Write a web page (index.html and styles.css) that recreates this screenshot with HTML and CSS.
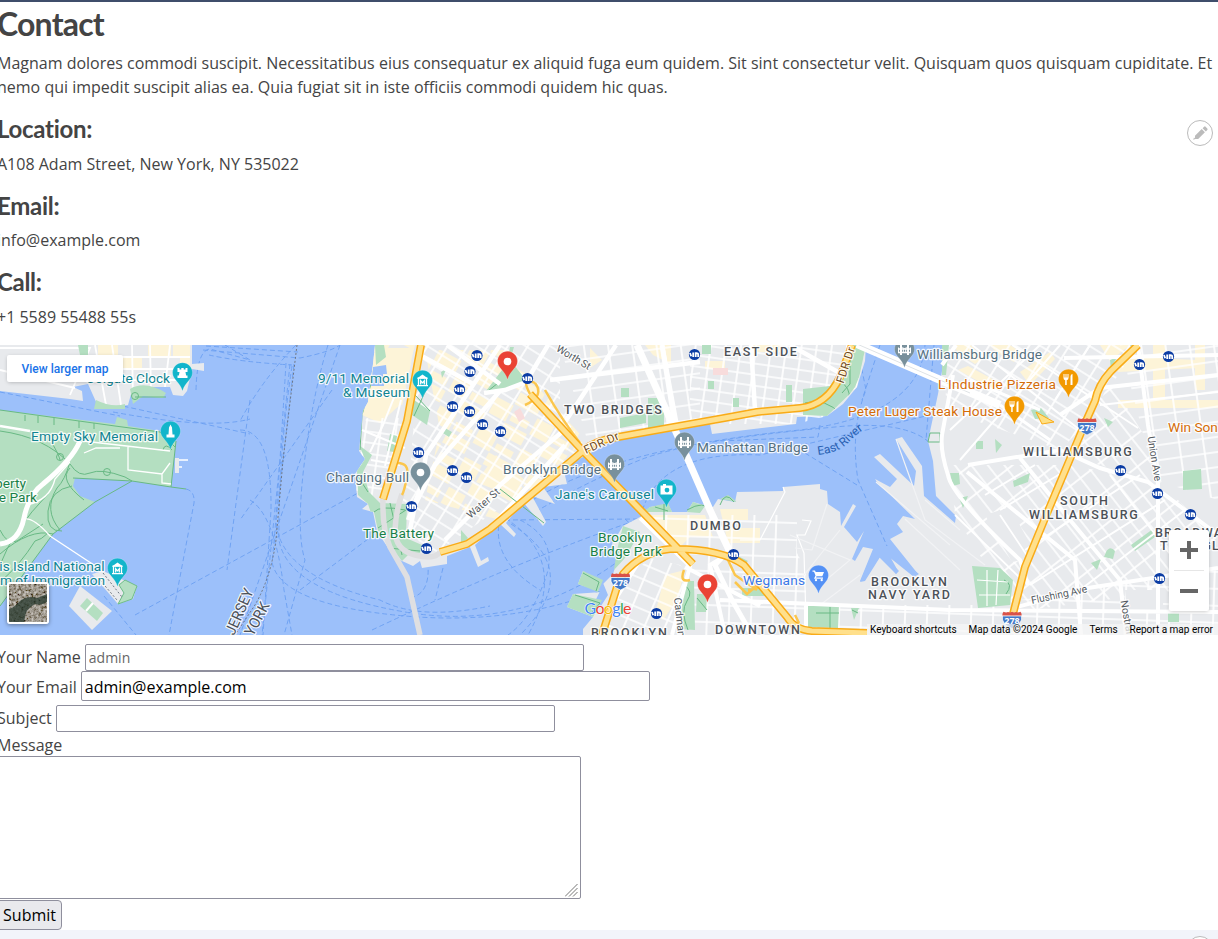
FILE: index.html
```
<!DOCTYPE html>
<html lang="en">
<head>
<meta charset="utf-8">
<title>Contact</title>
<link rel="stylesheet" href="styles.css">
</head>
<body>
<main class="page">
<section class="contact">
  <h2>Contact</h2>
  <p>Magnam dolores commodi suscipit. Necessitatibus eius consequatur ex aliquid fuga eum quidem. Sit sint consectetur velit. Quisquam quos quisquam cupiditate. Et nemo qui impedit suscipit alias ea. Quia fugiat sit in iste officiis commodi quidem hic quas.</p>
  <h4>Location:</h4>
  <p>A108 Adam Street, New York, NY 535022</p>
  <h4>Email:</h4>
  <p>info@example.com</p>
  <h4>Call:</h4>
  <p>+1 5589 55488 55s</p>
  <button class="edit edit-top" aria-label="Edit"><svg width="26" height="26" viewBox="0 0 26 26"><path d="M6.200 19.800l.8-2.200 1.500 1.400zM8 15.800l6.700-6.700 3.200 3.200-6.700 6.700H8zM15.600 8.200l1.500-1.500q.8-.7 1.500 0l1.700 1.700q.7.800 0 1.500l-1.500 1.500z"/></svg></button>
</section>

<div class="map">
<svg class="map-art" width="1218" height="290" viewBox="0 345 1218 290">
  <defs>
    <pattern id="gA" width="15" height="11" patternUnits="userSpaceOnUse" patternTransform="rotate(8)"><path d="M0 2H15M2 0V11"/></pattern>
    <pattern id="gB" width="17" height="13" patternUnits="userSpaceOnUse" patternTransform="rotate(32)"><path d="M0 2H17M2 0V13"/></pattern>
    <pattern id="gC" width="24" height="15" patternUnits="userSpaceOnUse" patternTransform="rotate(-8)"><path d="M0 2H24M2 0V15"/></pattern>
    <pattern id="gD" width="26" height="13" patternUnits="userSpaceOnUse" patternTransform="rotate(52)"><path d="M0 2H26M2 0V13"/></pattern>
    <pattern id="gE" width="19" height="14" patternUnits="userSpaceOnUse" patternTransform="rotate(23)"><path d="M0 2H19M2 0V14"/></pattern>
    <pattern id="gF" width="22" height="17" patternUnits="userSpaceOnUse" patternTransform="rotate(2)"><path d="M0 2H22M2 0V17"/></pattern>
    <pattern id="shops" width="46" height="34" patternUnits="userSpaceOnUse" patternTransform="rotate(28)"><path class="shop" d="M0 0H25V13H0zM27 15H46V33H27zM3 22H22V30H3z"/></pattern>
    <clipPath id="manhattan"><path d="M375 345L373 364 368 402 363 411 359 451 365 459 355 474 357 497 368 504 377 531 390 551 402 561 447 560 490 531 523 502 543 487 563 467 585 456 613 441 710 424 796 424 827 416 857 387 866 345z"/></clipPath>
    <path id="pin" stroke="#fff" stroke-opacity=".35" stroke-width=".6" d="M0-10.300C-5.700-10.300-10-5.700-10-.2-10 6.500-2.600 9 0 18 2.600 9 10 6.500 10-.2 10-5.700 5.700-10.300 0-10.300z"/>
    <g id="museum"><path fill="none" stroke="#fff" stroke-width="1.300" d="M-4-2.200V5M4-2.200V5M-5.500 5.200H5.500M-5-2.400H5M-1.800 4V.2L0 2.300 1.800.2V4"/><path fill="#fff" d="M-5.600-2L0-6 5.600-2z"/></g>
    <g id="bridge" fill="none" stroke="#fff"><path stroke-width="2" d="M-3.500-5.500V5.500M3.500-5.500V5.500"/><path stroke-width="1.500" d="M-6.500 3H6.500M-6.500-.5H6.500"/><path stroke-width="1" d="M-3.500-3Q0 1 3.500-3M-1.200-.5V3M1.200-.5V3M-6-2V3M6-2V3"/></g>
    <g id="fork" fill="#fff"><path d="M-5-5.500h1V-2h1v-3.500h1V-2h1v-3.500h1v4Q0 .3-1.800.8V5.500h-1.500V.8Q-5 .3-5-1.500zM2 5.500V-3Q2-5.500 4-5.500V5.500z"/></g>
    <g id="metro"><circle r="5.600" fill="#0b3ca4"/><path d="M-4.500-1.500L-3.300 1.800M-1.300-2V2.500M1.200 2.500V-1.300H2Q3.700-1.300 3.700 0V2.500" fill="none" stroke="#fff" stroke-width="1.800"/></g>
    <g id="shield"><path fill="#4379c8" stroke="#fff" stroke-width=".7" d="M-9.500-3H9.500Q11 5 0 9.500-11 5-9.500-3z"/><path fill="#d95249" d="M-9.500-3.500Q-10-5-8.500-7.300-6-6-4-7-2-6 0-7.200 2-6 4-7 6-6 8.500-7.300 10-5 9.500-3.500z"/></g>
  </defs>

  <rect class="water" y="345" width="1218" height="290"/>

  <!-- ferry routes -->
  <g class="ferry">
    <path d="M100 401L250 434M113 412Q210 430 250 419M0 392L120 416M196 390Q197 350 210 349L250 360M203 350L300 358Q330 352 340 345M206 346L298 352M209 355Q240 362 292 365M186 489Q195 491 194 503L169 635M250 400L227 570M225 345L250 360M296 345Q262 380 240 421"/>
    <path d="M290 364L262 635M286 363Q276 530 272 562 280 605 405 616T630 578M292 366Q278 460 279 540 288 592 405 612T620 560M294 364Q282 470 276 520 278 575 380 600 420 621 490 606M328 345Q314 390 306 450 295 530 305 560L284 635M340 345L240 635M240 430Q272 430 271 510L263 635M300 590L380 530M250 500Q275 515 284 590L292 635M332 390L240 520M410 598Q430 594 428 565M104 596L136 635M135 615L400 470M443 568L435 600M372 630Q520 560 640 519"/>
    <path d="M505 520L640 519Q655 450 760 455L930 415M505 518Q570 560 528 635M511 524Q585 570 520 635M520 520Q560 540 545 580T508 635M507 518Q590 450 800 430 920 415 925 345M535 512Q590 480 640 460T835 427Q905 420 930 443M857 485L800 450M857 345L866 390Q850 430 858 480L887 546M880 345L862 400M625 519L660 550M500 518Q490 560 540 590M820 425L818 437 720 441M934 345L926 440"/>
  </g>
  <path class="state-line" d="M297 345L283 460 276 540Q271 577 255 605L235 635"/>

  <!-- New Jersey -->
  <path class="land" d="M0 345H192V364L204 363V371L192 369 187 391 183 396 173 395 170 387 133 387 128 405 113 407 97 404 88 384 73 387 82 391 83 401 70 399 0 391z"/>
  <path class="shop" d="M98 345h20v13H98zM122 357h20v12h-20zM148 345h23v12h-23zM173 345h17v22h-10v-9h-7z"/>
  <g class="street"><path d="M95 345L106 405M112 345L121 405M132 345L133 398M150 345L151 390M170 345L165 387M90 357H190M97 369H188M101 380H185M0 348H90L70 395M0 370L75 388"/></g>
  <path class="park" d="M78 345H88V355H80zM96 400Q112 408 125 404V409H94zM130 389Q145 380 166 393L163 398 143 396 133 404z"/>
  <path class="park" d="M0 410L115 424 117 417 127 420 128 426 160 431 176 441 171 487 132 481 75 478 73 486 80 496 95 502 53 534 0 606z"/>
  <path class="path" d="M0 410L115 426 160 432 175 447M176 441L171 487 132 481 73 478M171 487L186 489M95 502L53 534 0 606M132 481L95 502M0 431Q45 437 70 464 79 478 90 473T125 477L132 481M70 462Q65 480 57 488 43 510 60 530M72 486Q50 490 48 511T62 531M84 500Q58 480 70 468M52 443Q59 455 60 460M0 554Q30 528 53 534M0 565Q13 530 48 494M0 582Q20 565 35 541 41 540 48 533M0 530Q7 545 17 541L43 524M163 450Q165 442 172 450M135 397L166 397M25 415V421M38 416V423M54 418V425M79 421V428M94 423V429"/>
  <circle class="path" cx="107" cy="472" r="3.500"/><circle class="path" cx="60" cy="457" r="3.500"/><circle class="path" cx="135" cy="396" r="3.500"/>
  <g class="street thin"><path d="M83 441L170 451M128 446V470L162 474 170 463M162 474V483L171 484M25 519Q34 518 50 536L97 567M84 453L96 448H120M27 505Q50 500 55 479L70 462M176 460H188M178 467H182"/><path stroke="#e8eaed" stroke-width="4" d="M177 458V473"/><path stroke-width="2.500" d="M0 426L30 431"/><path stroke-width="5" d="M0 544Q19 542 24 518T43 484Q72 460 80 441"/></g>
  <path class="land" d="M92 574L103 571 137 586 133 599 118 604z"/><path class="park outline" d="M125 580L137 586 132 599 118 604 124 593 119 585z"/>
  <path class="land" d="M80 586L112 611 92 630 69 606z"/><path class="park" d="M87 598L103 613 97 621 80 606z"/><path class="street" stroke-width="2" d="M93 603L86 611"/>
  <path class="state-line" d="M103 573L122 597M100 580L117 600"/>

  <!-- Manhattan -->
  <path class="land" d="M375 345L373 364 368 402 363 411 359 451 365 459 355 474 357 497 368 504 362 509 373 512 377 531 390 551 402 561 413 566 420 561 422 568 447 564V556L470 547 478 567 489 561 488 557 481 561 475 545 490 531 500 524 514 537 516 534 506 523 523 502 543 526 546 522 532 496 555 504 543 487 567 484 563 467 585 456 613 441 673 431 710 424 712 434 796 424 797 417 827 416 843 404 857 387 865 361 866 345z"/>
  <g clip-path="url(#manhattan)">
    <path fill="url(#shops)" d="M370 345H415L400 415 368 400zM425 350H505L585 440 500 520 425 500 440 430z"/>
    <path class="shop" d="M384 348h30l-12 55-22 20-18-8 7-60zM496 455l30 26-20 13-30-12zM553 467l12 13-10 7-10-9zM590 348l12 12-12 8zM645 345h26v19l-18-9zM705 361h20v8h-20zM752 345h30v7h-30z"/>
    <g><path fill="url(#gA)" d="M366 418H412L385 500 355 490zM690 345H866V425H690z"/><path fill="url(#gB)" d="M420 345H560V400L583 450 440 550 430 560 400 510 410 470z"/><path fill="url(#gC)" d="M560 345H700V425L590 450z"/></g>
    <path class="park" d="M359 445L365 459 357 470 358 495 368 504 362 510 374 512 378 531 402 561 408 555 420 553 422 545 406 538 407 504 380 503 369 492 363 472 372 455zM414 400L430 411 427 425 412 415zM390 434L397 436 394 452 387 451zM375 345h9l2 12-10 8zM443 427l9 5-3 5-8-5zM510 347h4l-3 10-2-4zM441 372l6-4-5 10zM461 530l7 8-7 8zM621 388h8v9h-8zM648 398h16v31h-16zM708 381h6v8h-6zM733 398h6v9h-6zM786 385h6v17h-6zM803 389l27-3 13-21 8-20h15l-2 20-9 22-13 17-14 12-25-1zM620 418l26-5v10l-26 5zM486 391L502 370 510 360 522 375 524 384 506 390zM702 345h9v9h-9z"/>
    <path class="path" d="M374 512Q380 505 405 510M390 503L402 555M378 528L406 510M388 548L420 551M415 395L430 411M414 416L426 390M805 403Q825 397 842 415M850 355V384L842 393M844 403Q855 395 843 383M488 391L498 383M375 370L362 415 360 450M357 475L368 492"/>
    <path fill="#9cc0fa" d="M373 367l13-2 1 9-4 0 1 12-13 0z"/>
    <path fill="#f8dcdc" d="M514 412l6-4 5 10-6 4zM713 368h15v7h-15z"/>
    <path class="street" stroke-width="4.500" d="M484 393L505 390 526 382 548 345M420 355L475 385M447 345L500 384M500 345L426 455 420 490 408 520M500 391L435 465 415 505 410 530M550 380L700 362M565 422L616 345M662 345L678 432M500 485L570 425M475 545L565 445M751 345L755 410M790 345L845 376M445 540L500 485"/>
  </g>
  <path class="street" stroke-width="2" d="M395 395L383 425 370 452M401 400L385 466M362 430L405 448M371 460L400 465"/>
  <path class="path" d="M500 489L544 523"/>

  <!-- Brooklyn -->
  <path class="land" d="M947 345L942 371 938 394 928 441 933 461 936 496 956 516 955 523 924 496 922 466 902 437 896 439 916 471 914 486 880 454 874 457 897 479 890 487 875 479 877 482 915 519 903 516 897 524 903 532 890 539 918 574 913 576 887 551 898 571 896 574 880 554 864 581 860 581 873 549 863 547 855 561 852 559 864 531 857 542 844 527 856 506 853 504 841 526 840 512 828 504 827 491 820 489V484L783 487V491L737 492 735 502 718 499 713 507 700 504 693 502 687 512H672L668 504 650 507 640 517 623 526 612 544 618 558 613 574 603 584 583 571 578 584 602 592 573 594 567 607 593 617 583 629V635H1218V345z"/>
  <path class="water" d="M585 589L600 591 589 614 601 606 608 595 601 578z"/>
  <!-- navy yard basins -->
  <path class="water" d="M888 550L919 574 914 577 884 553zM881 553L899 571 896 574 877 555zM874 549L882 554 865 581 860 582z"/>
  <g class="shop"><path d="M648 515H705L713 537H690L680 547 650 525zM720 509h28v11h-20v8h32v15h-32zM665 575l20-5-8 30-14 20-7-10zM600 625h10v10h-15z"/><path d="M955 345h16l12 14-8 5-18-12zM990 345h20l12 8-8 9-18-10zM958 370l10-4 32 17-4 8zM1020 372l30-20 5 7-25 26zM1115 365l12-8 70 3 1 8-80 4zM1118 400h100v8h-100zM1153 345h12v60h-12zM1195 345h10v45h-10zM1100 345h30l-20 16z"/></g>
  <g>
    <path fill="url(#gF)" d="M645 515H797V553L806 570V635H690L690 565 645 525zM806 605H1010V635H806z"/>
    <path fill="url(#gE)" d="M625 580L650 558 680 565 690 575 676 630 650 635H605z"/>
    <path fill="url(#gC)" d="M1120 345H1218V500L1155 480z"/>
    <path fill="url(#gB)" d="M948 345H1138L1085 425 1060 450 945 410z"/>
    <path fill="url(#gD)" d="M950 465L1065 465 1158 480 1218 540 1180 590 1015 612 955 515zM1110 380L1147 440 1153 480 1075 458z"/>
    <path fill="url(#gF)" d="M1020 600L1218 570V635H1010z"/>
  </g>
  <path class="land" d="M1125 590h38v20h-36zM985 515l25-8 27 50-25 5z"/>
  <g class="park"><path d="M583 571L603 580 598 592 578 584zM573 594L602 600 593 617 567 607zM623 526L640 532 625 558 614 570 617 550zM650 507l18-4 4 9h-30zM687 512l6-10 12 4-5 7zM720 499l8-4 9 7zM684 581h10l1 49-15-1zM697 594h10l-1 18h-10zM738 556l10 5-5 5zM807 605h32l-1 23-30-1zM851 608h8l-5 12zM742 588h27v8h-27z"/><path d="M942 345h7l-3 30h-4zM950 473h9l1 11-7 2zM959 498l9-2-5 12zM972 566L1000 568 1013 580 1010 605 978 608zM976 441h7v8h-7zM995 439l7 6-6 8zM1013 481l17-8-2 9-14 5zM1031 410l10-2 8 10-14 1zM1104 418l9 4-5 5zM1183 471l18-2 1 20-19 1zM1131 545l22-16 2 8-20 14zM1106 552q4-7 9-1l-2 8-9-2zM1091 563l10-4-4 11zM1168 613h11v9h-11zM1110 360l7-3-6 12zM1130 345h10l-2 9z"/></g>
  <path class="path" d="M583 573L599 582 596 591M575 595L600 603 590 615M620 535L632 540M615 552H630M655 507L668 511M687 510Q704 500 711 510M684 585Q694 591 687 601T688 630M697 598L707 610M664 504V520M720 505Q725 490 734 502M830 607V628M816 613H839M852 610L858 613M1004 580q10 4 2 14M930 433h10v9h-12z"/>
  <g class="street">
    <path stroke-width="1.200" d="M783 487L785 492 760 540H740M802 520L811 521 805 535H797L804 553 806 620M977 580L1008 582M979 595H1010M987 570V606M998 570L996 605"/>
    <path stroke="#f2f3f5" stroke-width="1.200" d="M827 504L812 550M840 530L800 580M790 535L850 560 820 585M925 500L960 530M876 482L950 545M896 439L925 520 985 565M905 519L960 570M812 550L795 548M860 575L820 605"/>
    <path d="M1000 515L1030 560M1012 345L1138 428M955 515L1020 578"/>
    <path stroke-width="4" d="M720 600L950 610 1218 612M806 605V630M956 345L942 365M1060 415L1100 388 1218 375M953 375L942 435Q940 450 948 475 951 495 1020 560L1028 585M968 465L1060 450 1100 468 1148 482 1218 535M1138 345L1148 425 1158 484 1158 635M1020 458L1070 520 1120 580 1126 635M967 472L1075 560 1081 635M1013 608L1088 588 1218 568M1064 358L1218 355M640 518L690 566 672 635M735 550L710 565 725 635M685 567L760 606M612 605L640 560"/>
    <path stroke-width="2" d="M972 345L1080 430M1060 345L960 460M1040 345L950 430M1090 345L1055 400M1218 392L1100 405M985 495L1035 465M1000 510L1060 474M1025 550L1140 475M1030 585L1165 500M1080 590L1185 510M1110 475L1190 580"/>
  </g>

  <!-- bridges and highways -->
  <path class="street" stroke-width="7" d="M637 345L676 432 710 510 729 550"/>
  <path class="street" stroke-width="5" d="M729 550L715 565 732 600 752 635M662 345L675 425"/>
  <path class="street" stroke-width="8" d="M857 344L945 382 1000 405"/>
  <path class="street" stroke-width="3" d="M1000 405L1050 440M970 380L1040 410"/>
  <path d="M857 344L970 393" stroke="#dfe3e6" fill="none"/>
  <g fill="none" stroke="#dfdfe1" stroke-width="5.500"><path d="M383 498Q382 529 390 547L407 577 420 635M402 494Q396 510 395 530 395 550 415 555T440 552"/></g>
  <g class="ramp"><path d="M396 463Q410 462 407 477T402 495M530 394Q520 375 535 383M535 383Q545 396 525 405M545 390Q562 420 580 443M684 570Q679 583 690 580M728 560L735 575 757 590M748 590q18-2 14-11M795 615l4 8M735 582l12 12 14-12"/></g>
  <g class="highway-edge"><path id="h1" d="M421 345L407 421 383 499M440 552L467 544 490 529 583 451Q595 440 618 437L730 417 757 412 800 408Q827 405 840 377L852 345M530 394L583 451 693 564M602 635L617 587 623 574Q642 552 670 549 720 548 744 565L787 617Q795 630 812 631L867 633M1138 345L1111 371Q1098 385 1095 401L1086 421 1048 511 1025 567 1013 614"/><path id="h2" class="slim" d="M1112 371Q1092 388 1089 421"/></g>
  <use class="highway" href="#h1"/>
  <path d="M1036 412l18 10-12 2z" fill="#ffe083" stroke="#f9ab17"/>

  <g class="subways">
    <use href="#metro" x="477" y="355.500"/><use href="#metro" x="470" y="371.500"/><use href="#metro" x="459.500" y="389.500"/><use href="#metro" x="452.500" y="406.500"/><use href="#metro" x="469.500" y="411.500"/><use href="#metro" x="482.500" y="424.500"/><use href="#metro" x="500.500" y="431.500"/><use href="#metro" x="418.500" y="452.500"/><use href="#metro" x="452.500" y="470.500"/><use href="#metro" x="466.500" y="477.500"/><use href="#metro" x="411.500" y="506.500"/><use href="#metro" x="426.500" y="548.500"/><use href="#metro" x="527.500" y="378.500"/><use href="#metro" x="694.500" y="354.500"/><use href="#metro" x="656.500" y="613.500"/><use href="#metro" x="733.500" y="554.500"/><use href="#metro" x="1168.500" y="356.500"/><use href="#metro" x="1139.500" y="364.500"/><use href="#metro" x="1120.500" y="470.500"/><use href="#metro" x="1157.500" y="493.500"/><use href="#metro" x="1190.500" y="514.500"/><use href="#metro" x="1159.500" y="578.500"/>
  </g>

  <g class="label poi">
    <text x="86" y="383" textLength="84">Colgate Clock</text><text x="318" y="383" textLength="91">9/11 Memorial</text><text x="343" y="397" textLength="67">&amp; Museum</text><text x="31" y="441" textLength="127">Empty Sky Memorial</text>
    <text x="104.500" y="571" text-anchor="end">Ellis Island National</text><text x="105" y="585" text-anchor="end">Museum of Immigration</text><text x="555" y="499" textLength="99">Jane's Carousel</text>
  </g>
  <g class="label green"><text x="26" y="488" text-anchor="end">Liberty</text><text x="37" y="502" text-anchor="end">State Park</text><text x="363" y="538" textLength="71">The Battery</text><text x="598" y="542" textLength="54">Brooklyn</text><text x="590" y="556" textLength="72">Bridge Park</text></g>
  <g class="label slate"><text x="326" y="482" textLength="83">Charging Bull</text><text x="503" y="474" textLength="98">Brooklyn Bridge</text><text x="697" y="452" textLength="111">Manhattan Bridge</text><text x="917" y="359" textLength="125">Williamsburg Bridge</text></g>
  <g class="label food"><text x="938" y="389" textLength="118">L'Industrie Pizzeria</text><text x="848" y="416" textLength="154">Peter Luger Steak House</text><text x="1168" y="432">Win Son</text></g>
  <text class="label shopname" x="743" y="585" textLength="62">Wegmans</text>
  <g class="label area">
    <text x="564" y="414" textLength="99">TWO BRIDGES</text><text x="724" y="355.500" textLength="74">EAST SIDE</text><text x="690" y="529.500" textLength="52">DUMBO</text><text x="871" y="586" textLength="77">BROOKLYN</text><text x="868" y="599" textLength="83">NAVY YARD</text><text x="1023" y="455.500" textLength="110">WILLIAMSBURG</text><text x="1060" y="505" textLength="49">SOUTH</text><text x="1029" y="518.500" textLength="110">WILLIAMSBURG</text><text x="1155" y="536.500">BROADWAY</text><text x="1160" y="549.500">TRIANGLE</text><text x="591" y="636.500" textLength="77">BROOKLYN</text><text x="715" y="633.500" textLength="86">DOWNTOWN</text>
  </g>
  <g class="label state"><text transform="translate(234 636) rotate(-66)" textLength="49" lengthAdjust="spacingAndGlyphs">JERSEY</text><text transform="translate(253 637) rotate(-62)" textLength="36" lengthAdjust="spacingAndGlyphs">YORK</text></g>
  <g class="label road"><text transform="translate(555.500 350.500) rotate(31)" textLength="38">Worth St</text><text transform="translate(470.500 519) rotate(-41)" textLength="40">Water St</text><text transform="translate(1147.500 437) rotate(81)" textLength="45">Union Ave</text><text transform="translate(1032 604) rotate(-12)" textLength="57">Flushing Ave</text><text transform="translate(1120.500 601) rotate(80)">Nostrand Ave</text><text transform="translate(674 598) rotate(84)">Cadman Plaza</text></g>
  <g class="label fdr"><text transform="translate(586 454) rotate(-24)" textLength="37">FDR Dr</text><text transform="translate(843.500 384) rotate(-72)" textLength="37">FDR Dr</text></g>
  <path id="riverPath" fill="none" d="M818 455Q838 453 848 443T866 428"/><text class="river"><textPath href="#riverPath" textLength="53">East River</textPath></text>

  <g class="pins">
    <g transform="translate(182.500 373)" class="t"><use href="#pin"/><path fill="#fff" d="M-5-5h2v1.500h1.800V-5h2.400v1.500H3V-5h2v4H3l.6 3.500H5V5H-5V2.500h1.400L-3-1h-2z"/></g>
    <g transform="translate(170.500 431.500)" class="t"><use href="#pin"/><path fill="#fff" d="M0-7L1.500-4 2 3H4V6H-4V3H-2L-1.500-4z"/></g>
    <g transform="translate(117.500 568.500)" class="t"><use href="#pin"/><use href="#museum"/></g>
    <g transform="translate(422.500 380.500)" class="t"><use href="#pin"/><use href="#museum"/></g>
    <g transform="translate(666.500 489.500)" class="t"><use href="#pin"/><path fill="#fff" d="M-6-4h2.500v-1.500h3V-4H6V5H-6z"/><circle cy=".6" cx=".5" r="2.400" class="ring"/></g>
    <g transform="translate(420.500 472.500)" class="s"><use href="#pin"/><circle r="3.800" fill="#fff"/></g>
    <g transform="translate(614.500 464.500)" class="s"><use href="#pin"/><use href="#bridge"/></g>
    <g transform="translate(684.500 442.500)" class="s"><use href="#pin"/><use href="#bridge"/></g>
    <g transform="translate(904.500 349.500)" class="s"><use href="#pin"/><use href="#bridge"/></g>
    <g transform="translate(507.500 361.500)" class="r"><use href="#pin"/><circle r="3.800" fill="#fff"/></g>
    <g transform="translate(707.500 584.500)" class="r"><use href="#pin"/><circle r="3.800" fill="#fff"/></g>
    <g transform="translate(1068.500 379.500)" class="o"><use href="#pin"/><use href="#fork"/></g>
    <g transform="translate(1014.500 406.500)" class="o"><use href="#pin"/><use href="#fork"/></g>
    <g transform="translate(818.500 575.500)" class="b"><use href="#pin"/><path fill="#fff" d="M-6-5h2.500l.7 1.500H5.500L3.800.8H-2L-2.500 2H4.500V3.200H-4.500L-3-.1-4.500-3.700H-6z"/><g fill="#fff"><circle cx="-2.500" cy="4.600" r="1.200"/><circle cx="3.200" cy="4.600" r="1.200"/></g></g>
  </g>
  <g class="shields"><use href="#shield" x="620.500" y="580.500"/><use href="#shield" x="1087" y="425.500"/><use href="#shield" x="1012" y="619"/><text x="620.500" y="585.500">278</text><text x="1087" y="430.500">278</text><text x="1012" y="624">278</text></g>
  <text class="google" x="584.500" y="614" textLength="47"><tspan fill="#4285f4">G</tspan><tspan fill="#ea4335">o</tspan><tspan fill="#fbbc05">o</tspan><tspan fill="#4285f4">g</tspan><tspan fill="#34a853">l</tspan><tspan fill="#ea4335">e</tspan></text>
</svg>
<a class="larger">View larger map</a>
<div class="satellite"><svg width="38" height="38" viewBox="0 0 38 38"><defs><filter id="grain"><feTurbulence type="fractalNoise" baseFrequency=".4" numOctaves="3" seed="4"/><feColorMatrix values="1.300 0 0 0 -.25 1.300 0 0 0 -.28 1.300 0 0 0 -.33 0 0 0 0 .7"/></filter></defs><rect width="38" height="38" fill="#827b70"/><rect width="38" height="38" filter="url(#grain)"/><path fill="#2f3e33" d="M0 25Q6 23 12 16 20 11 28 14L38 10V18Q32 22 26 20 19 24 17 29L15 38H0z"/><rect width="38" height="38" filter="url(#grain)" opacity=".25"/></svg></div>
<div class="zoomer"><button aria-label="Zoom in"><svg width="18" height="18"><path d="M9 0V18M0 9H18"/></svg></button><button aria-label="Zoom out"><svg width="18" height="18"><path d="M0 9H18"/></svg></button></div>
<div class="credits"><span class="c1">Keyboard shortcuts</span><span class="c2">Map data ©2024 Google</span><span class="c3">Terms</span><span class="c4">Report a map error</span></div>
</div>

<form class="form">
  <div class="row r1"><label for="name">Your Name</label><input id="name" class="small" placeholder="admin"></div>
  <div class="row r2"><label for="email">Your Email</label><input id="email" value="admin@example.com"></div>
  <div class="row r3"><label for="subject">Subject</label><input id="subject" class="small"></div>
  <div class="row r4"><label for="message">Message</label></div>
  <div class="area-wrap"><textarea id="message"></textarea><svg class="grip" width="13" height="13"><path d="M0 12.500L12.500 0M4 12.500L12.500 4M8 12.500L12.500 8"/></svg></div>
  <button class="submit" type="button">Submit</button>
</form>
<footer class="next"><span class="edit edit-bottom"></span></footer>
</main>
</body>
</html>
```
FILE: styles.css
```
* { box-sizing: border-box; }
body { margin: 0; background: #fff; color: #444; font: 16px/24px "Open Sans", "Noto Sans", sans-serif; overflow: hidden; }
.page { height: 939px; border-top: 2px solid #3f4d6b; overflow: hidden; position: relative; display: flex; flex-direction: column; }
.contact { height: 343px; padding-top: 2.5px; margin-left: -3px; flex: none; }
.contact p { margin: 0 0 16px; width: 1219px; }
h2, h4 { margin: 0 0 8px; font-family: Lato, sans-serif; font-weight: 700; line-height: 1.2; }
h2 { font-size: 32px; letter-spacing: -0.8px; }
h4 { font-size: 24px; letter-spacing: -0.3px; }

.edit { position: absolute; width: 26px; height: 26px; border: 1px solid #bbb; border-radius: 50%; background: #fff; padding: 0; }
.edit svg { display: block; margin: -1px; fill: #bbb; }
.edit-top { left: 1187px; top: 118px; }
.edit-bottom { left: 1187px; top: 6px; }

.map { position: relative; height: 290px; flex: none; overflow: hidden; font-family: Roboto, sans-serif; }
.map-art { display: block; }
.water { fill: #9cc0fa; }
.land { fill: #e8eaed; }
.park { fill: #b4dfc1; }
.outline { stroke: #6dbd88; }
.shop { fill: #fdf4d8; }
pattern path:not(.shop) { fill: none; stroke: #fff; stroke-width: 1.7; }
.street { fill: none; stroke: #fff; }
g.street { stroke-width: 1.8; }
g.thin { stroke-width: 1.3; }
.path { fill: none; stroke: #68b984; stroke-width: 1; }
.ferry { fill: none; stroke: #6b9ff2; stroke-width: .9; stroke-dasharray: 5 3; }
.state-line { fill: none; stroke: #6f7784; stroke-width: 1; stroke-dasharray: 2 2; }
.highway-edge { fill: none; stroke: #f9ab17; stroke-width: 8; stroke-linejoin: round; }
.highway { fill: none; stroke: #ffe08c; stroke-width: 5; stroke-linejoin: round; }
.slim { stroke-width: 2; }
.ramp { fill: none; stroke: #fbc64d; stroke-width: 2.5; }
.label text, text.label { font-size: 13.7px; paint-order: stroke; stroke: rgba(255,255,255,.85); stroke-width: 2.5px; stroke-linejoin: round; }
.poi { fill: #108492; }
.green { fill: #188047; }
.slate { fill: #557080; }
.food { fill: #d46c08; }
.shopname { fill: #3b78e7; }
.area { fill: #4c5157; }
.area text { font-size: 12.5px; font-weight: 500; letter-spacing: 1.2px; }
.state { fill: #4b5058; }
.state text { font-size: 15px; }
.road { fill: #555b62; }
.road text { font-size: 10.5px; }
.fdr { fill: #704818; }
.fdr text { font-size: 11.5px; }
.river { font-size: 12px; fill: #2860b2; }
.t { fill: #12b5cb; }
.s { fill: #78909c; }
.r { fill: #ea4335; }
.o { fill: #f29900; }
.b { fill: #5491f5; }
.ring { fill: #12b5cb; }
.shields text { font: 700 9px "Open Sans", sans-serif; fill: #fff; text-anchor: middle; }
.google { font: 400 16px Lato, sans-serif; paint-order: stroke; stroke: #fff; stroke-width: 1px; }

.larger { position: absolute; left: 7px; top: 10px; width: 116px; height: 27px; background: #fff; border-radius: 2px; box-shadow: 0 1px 4px -1px rgba(0,0,0,.3); color: #1a73e8; font: 500 12px/28px Roboto, sans-serif; text-align: center; }
.satellite { position: absolute; left: 7px; top: 237px; width: 42px; height: 42px; border: 2px solid #fff; border-radius: 3px; box-shadow: 0 1px 4px rgba(0,0,0,.4); overflow: hidden; }
.satellite svg { display: block; }
.zoomer { position: absolute; left: 1169px; top: 185px; width: 40px; height: 81px; background: #fff; border-radius: 2px; box-shadow: 0 1px 4px -1px rgba(0,0,0,.3); }
.zoomer button { display: grid; place-items: center; width: 30px; height: 40px; margin: 0 5px; padding: 0; border: 0; background: none; }
.zoomer button + button { border-top: 1px solid #e6e6e6; }
.zoomer path { stroke: #666; stroke-width: 4; }
.credits { position: absolute; right: 0; bottom: 0; width: 351px; height: 11px; padding-left: 3px; background: rgba(245,245,245,.75); color: #000; font: 10px/11px Roboto, sans-serif; white-space: nowrap; display: flex; }
.c1 { width: 98.5px; }
.c2 { width: 121px; }
.c3 { width: 40px; }

.form { height: 295px; padding-top: 9px; flex: none; margin-left: -3px; }
.row { display: flex; align-items: center; gap: 4px; }
.row label { flex: none; }
.r1 { height: 27px; }
.r1 label, .r3 label { margin-top: -2px; }
.r2 { height: 30px; }
.r2 label { margin-top: 1px; }
.r2 input { padding-top: 2px; }
.r3 { height: 35px; }
.r4 { height: 20px; }
.r4 label { margin-top: -2px; }
input, textarea { border: 1px solid #8f8f9d; border-radius: 2px; background: #fff; color: #000; font: 16px "Open Sans", sans-serif; padding: 1px 3px; outline: 0; }
input { width: 569px; height: 30px; }
input.small { width: 499px; height: 27px; font-size: 14px; }
input::placeholder { color: #666; opacity: 1; }
.area-wrap { position: relative; width: 584px; height: 144px; }
textarea { display: block; width: 584px; height: 143px; resize: none; }
.grip { position: absolute; right: 3px; bottom: 3px; stroke: #777; fill: none; }
.submit { display: block; width: 66px; height: 30px; margin-left: -1px; border: 1px solid #8f8f9d; border-radius: 4px; background: #e9e9ed; color: #000; padding: 0 5px; font: 16px "Open Sans", sans-serif; text-align: right; }
.next { position: relative; flex: 1; background: #f2f4fa; }
```
